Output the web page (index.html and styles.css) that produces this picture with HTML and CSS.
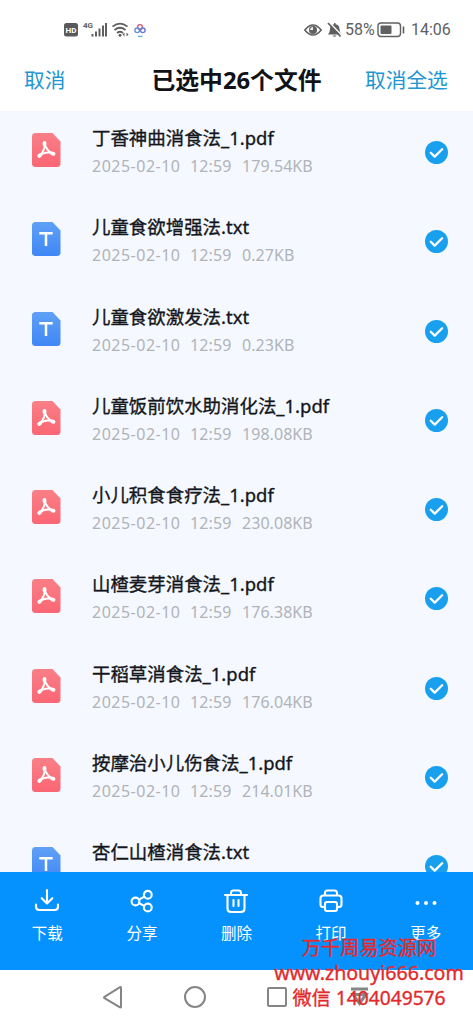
FILE: index.html
```html
<!DOCTYPE html>
<html lang="zh-CN">
<head>
<meta charset="utf-8">
<title>已选中26个文件</title>
<link rel="stylesheet" href="styles.css">
</head>
<body>
<svg class="defs" width="0" height="0">
  <defs>
    <linearGradient id="red" x1="0" y1="0" x2="0" y2="1"><stop offset="0" stop-color="#f97f86"/><stop offset="1" stop-color="#fb6674"/></linearGradient>
    <linearGradient id="blue" x1="0" y1="0" x2="0" y2="1"><stop offset="0" stop-color="#60a0f6"/><stop offset="1" stop-color="#3f87f5"/></linearGradient>
    <symbol id="pdf" viewBox="0 0 29 34">
      <path d="M3.500 0H20.500L28.500 8.500V30.500Q28.500 34 25 34H3.500Q0 34 0 30.500V3.500Q0 0 3.500 0Z" fill="url(#red)"/>
      <g fill="none" stroke="#fff" stroke-linecap="round" stroke-linejoin="round"><path d="M12.500 9.800C13.500 15 10.500 20 7.200 23M12.500 9.800C13.500 15 16.500 19 21.500 21M7.200 23C11.500 19.500 16.500 18.500 21.500 21" stroke-width="1.900"/><path d="M12.500 9.800v1.500M7.200 22.900l.9-.7M20.300 20.500l1.200.4" stroke-width="3.800"/></g>
    </symbol>
    <symbol id="txt" viewBox="0 0 29 34">
      <path d="M3.500 0H20.500L28.500 8.500V30.500Q28.500 34 25 34H3.500Q0 34 0 30.500V3.500Q0 0 3.500 0Z" fill="url(#blue)"/>
      <path d="M7.300 11.300H20.700M14 11.300V24" fill="none" stroke="#fff" stroke-width="2.500"/>
    </symbol>
    <symbol id="check" viewBox="0 0 22 22"><circle cx="11" cy="11" r="11" fill="#18a0ee"/><path d="M5.500 11.200l3.800 3.700 7.100-7" fill="none" stroke="#fff" stroke-width="2.200" stroke-linecap="round" stroke-linejoin="round"/></symbol>
  </defs>
</svg>
<div class="screen">
  <div class="status">
    <svg class="status-left" width="84" height="18" viewBox="0 0 84 18">
      <rect x="0" y="2" width="14" height="13.500" rx="2.500" fill="#59595b"/>
      <text x="7" y="12" class="hd">HD</text>
      <text x="19" y="7" class="g4">4G</text>
      <path d="M28.500 13v2.500M32 10.500v5M35.500 7.500v8M39 4.500v11M42 2v13.500" stroke="#606062" stroke-width="2" fill="none"/>
      <g fill="none" stroke="#606062" stroke-width="1.800"><path d="M48.500 5.600q7.500-6 15 0M50.500 9q5.500-4.500 11 0M53 12q3-2.500 6 0"/></g><circle cx="56" cy="14.300" r="1.500" fill="#606062"/><path d="M58.500 13.500l2-2 0 4zM64.500 13.500l-2-2 0 4z" fill="#606062"/>
      <g fill="none" stroke-width="1.400"><circle cx="76" cy="6" r="2.400" stroke="#cf5b78"/><circle cx="73.200" cy="9.300" r="2.300" stroke="#6590d8"/><circle cx="78.800" cy="9.300" r="2.300" stroke="#6d78d0"/><path d="M74 15.400h4.500" stroke="#6baede"/></g>
    </svg>
    <div class="status-right">
      <svg width="38" height="18" viewBox="0 0 38 18">
        <path d="M.8 9q8.200-10 16.400 0q-8.200 10-16.400 0z" fill="none" stroke="#606062" stroke-width="1.600"/><circle cx="9" cy="9" r="4" fill="#606062"/><path d="M9 9V6q-2.500 0-3 3z" fill="#eee"/>
        <path d="M24 13.500q2-2 2-5.500 0-4 4-4.800V2h1.500v1.200q4 .8 4 4.800 0 3.500 2 5.500zM28.500 14.500h4q-2 2.500-4 0z" fill="#606062"/><path d="M25.500 1.500l12.500 13" stroke="#fff" stroke-width="1.500"/><path d="M24 2l12.500 13.500" stroke="#606062" stroke-width="1.700"/>
      </svg>
      <span class="pct">58%</span>
      <svg class="battery" width="28" height="16" viewBox="0 0 28 16"><rect x="1" y="1" width="22.500" height="13.500" rx="3" fill="none" stroke="#606062" stroke-width="1.400"/><rect x="3.500" y="3.500" width="11" height="8.500" rx="1" fill="#606062"/><path d="M26.500 4.500v7" stroke="#606062" stroke-width="1.600"/></svg>
      <span class="time">14:06</span>
    </div>
  </div>
  <header class="head"><span class="action">取消</span><h1 class="title">已选中26个文件</h1><span class="action">取消全选</span></header>
  <main class="list">
    <div class="row"><svg class="file"><use href="#pdf"/></svg><div class="info"><div class="name">丁香神曲消食法_1.pdf</div><div class="meta"><span>2025-02-10</span><span>12:59</span><span>179.54KB</span></div></div><svg class="check"><use href="#check"/></svg></div>
    <div class="row"><svg class="file"><use href="#txt"/></svg><div class="info"><div class="name">儿童食欲增强法.txt</div><div class="meta"><span>2025-02-10</span><span>12:59</span><span>0.27KB</span></div></div><svg class="check"><use href="#check"/></svg></div>
    <div class="row"><svg class="file"><use href="#txt"/></svg><div class="info"><div class="name">儿童食欲激发法.txt</div><div class="meta"><span>2025-02-10</span><span>12:59</span><span>0.23KB</span></div></div><svg class="check"><use href="#check"/></svg></div>
    <div class="row"><svg class="file"><use href="#pdf"/></svg><div class="info"><div class="name">儿童饭前饮水助消化法_1.pdf</div><div class="meta"><span>2025-02-10</span><span>12:59</span><span>198.08KB</span></div></div><svg class="check"><use href="#check"/></svg></div>
    <div class="row"><svg class="file"><use href="#pdf"/></svg><div class="info"><div class="name">小儿积食食疗法_1.pdf</div><div class="meta"><span>2025-02-10</span><span>12:59</span><span>230.08KB</span></div></div><svg class="check"><use href="#check"/></svg></div>
    <div class="row"><svg class="file"><use href="#pdf"/></svg><div class="info"><div class="name">山楂麦芽消食法_1.pdf</div><div class="meta"><span>2025-02-10</span><span>12:59</span><span>176.38KB</span></div></div><svg class="check"><use href="#check"/></svg></div>
    <div class="row"><svg class="file"><use href="#pdf"/></svg><div class="info"><div class="name">干稻草消食法_1.pdf</div><div class="meta"><span>2025-02-10</span><span>12:59</span><span>176.04KB</span></div></div><svg class="check"><use href="#check"/></svg></div>
    <div class="row"><svg class="file"><use href="#pdf"/></svg><div class="info"><div class="name">按摩治小儿伤食法_1.pdf</div><div class="meta"><span>2025-02-10</span><span>12:59</span><span>214.01KB</span></div></div><svg class="check"><use href="#check"/></svg></div>
    <div class="row"><svg class="file"><use href="#txt"/></svg><div class="info"><div class="name">杏仁山楂消食法.txt</div></div><svg class="check"><use href="#check"/></svg></div>
  </main>
  <footer class="tools">
    <div class="tool"><svg viewBox="0 0 26 26"><path d="M13 2v13M7.700 10.200L13 15.500l5.300-5.300M2 16.500v2.300q0 3.200 3.200 3.200h15.600q3.200 0 3.200-3.200v-2.300"/></svg><span>下载</span></div>
    <div class="tool"><svg viewBox="0 0 26 26"><circle cx="6.500" cy="13.500" r="3.900"/><circle cx="18.800" cy="6.800" r="3.900"/><circle cx="18.800" cy="19.500" r="3.900"/><path d="M10 11.700l5.400-3M10 15.200l5.400 2.700"/></svg><span>分享</span></div>
    <div class="tool"><svg viewBox="0 0 26 26"><path d="M2 7h22M8 7V5q0-2.500 2.500-2.500h5Q18 2.500 18 5v2M4.500 7v13.500q0 3.500 3.500 3.500h10q3.500 0 3.500-3.500V7M10.500 12v6M15.500 12v6"/></svg><span>删除</span></div>
    <div class="tool"><svg viewBox="0 0 26 26"><path d="M7 7.500V5q0-2.500 2.500-2.500h7Q19 2.500 19 5v2.500M7 19H5q-2.500 0-2.500-2.500V10.500q0-3 3-3h15q3 0 3 3v6Q23.500 19 21 19h-2"/><rect x="7" y="14" width="12" height="9" rx="2"/></svg><span>打印</span></div>
    <div class="tool"><svg viewBox="0 0 26 26"><g fill="#fff" stroke="none"><circle cx="4.500" cy="15" r="2"/><circle cx="13" cy="15" r="2"/><circle cx="21.500" cy="15" r="2"/></g></svg><span>更多</span></div>
  </footer>
  <nav class="nav">
    <svg viewBox="0 0 24 24"><path d="M20 3v19Q20 23 19 22.300L3.500 13.200q-1-.7 0-1.400L19 2.200q1-.5 1 .8z"/></svg>
    <svg viewBox="0 0 24 24"><circle cx="12" cy="12" r="10"/></svg>
    <svg viewBox="0 0 24 24"><rect x="3" y="3" width="18" height="18" rx="1"/></svg>
    <svg class="hide" viewBox="0 0 24 24"><path d="M4 4h17M6 9.500h13l-6.500 9z"/></svg>
  </nav>
  <div class="stamp"><span class="s1">万千周易资源网</span><span class="s2">www.zhouyi666.com</span><span class="s3">微信 1404049576</span></div>
</div>
</body>
</html>
```
FILE: styles.css
```css
* { box-sizing: border-box; }
body { margin: 0; background: #fff; font-family: "Noto Sans", "Noto Sans CJK SC", sans-serif; color: #14161c; }
.defs { position: absolute; }
.screen { position: relative; width: 473px; height: 1024px; overflow: hidden; display: flex; flex-direction: column; }
.status { height: 50px; flex: none; display: flex; justify-content: space-between; align-items: center; padding: 10px 20px 0 64px; }
.status-right { display: flex; align-items: center; width: 149px; color: #606062; font: 16px/20px Roboto, sans-serif; white-space: nowrap; }
.hd { font: bold 8px Roboto, sans-serif; fill: #fff; text-anchor: middle; }
.g4 { font: bold 8px Roboto, sans-serif; fill: #606062; }
.pct { width: 30px; margin-left: 3px; }
.battery { margin-left: 2px; }
.time { margin-left: 6px; }
.head { height: 61px; flex: none; display: flex; justify-content: space-between; align-items: center; padding: 0 24px 2px; }
.action { font-size: 20.700px; line-height: 30px; color: #2196d3; width: 84px; white-space: nowrap; }
.title { margin: 0; font-size: 23.800px; line-height: 34px; font-weight: 700; color: #101217; white-space: nowrap; width: 174px; margin-right: 20px; }
.head .action:first-child { width: 108px; }
.list { height: 761px; flex: none; overflow: hidden; background: #f5f9ff; }
.row { height: 89.250px; display: flex; align-items: flex-start; padding: 14px 25px 0 32px; }
.file { width: 29px; height: 34px; margin-top: 8px; flex: none; }
.info { margin-left: 31px; flex: 1; }
.name { font-size: 18.450px; line-height: 26px; height: 26px; -webkit-text-stroke: .35px #14161c; white-space: nowrap; }
.meta { display: grid; grid-template-columns: 98px 52px auto; font-size: 16px; line-height: 22px; margin-top: 4px; color: #b0b3b8; white-space: nowrap; letter-spacing: .5px; }
.meta span:nth-child(2) { letter-spacing: .1px; }
.meta span:nth-child(3) { letter-spacing: .05px; }
.check { width: 23px; height: 23px; margin-top: 16px; flex: none; }
.tools { height: 98px; flex: none; background: #0592ff; display: grid; grid-template-columns: repeat(5, 1fr); }
.tool { display: flex; flex-direction: column; align-items: center; padding-top: 16px; color: #fff; font-size: 15.500px; line-height: 22px; }
.tool svg { width: 26px; height: 26px; fill: none; stroke: #fff; stroke-width: 2.100; stroke-linecap: round; stroke-linejoin: round; }
.tool span { margin-top: 8px; }
.nav { height: 54px; flex: none; display: flex; gap: 58px; align-items: center; padding-left: 101px; }
.nav svg { width: 24px; height: 24px; fill: none; stroke: #858585; stroke-width: 2; }
.nav .hide { stroke-width: 3; }
.stamp { position: absolute; left: 274px; top: 935px; width: 190px; color: #e22a2d; -webkit-text-stroke: .35px #e22a2d; font-size: 19.200px; line-height: 25px; display: flex; flex-direction: column; align-items: center; white-space: nowrap; }
.s2 { font-size: 19.600px; }
```
